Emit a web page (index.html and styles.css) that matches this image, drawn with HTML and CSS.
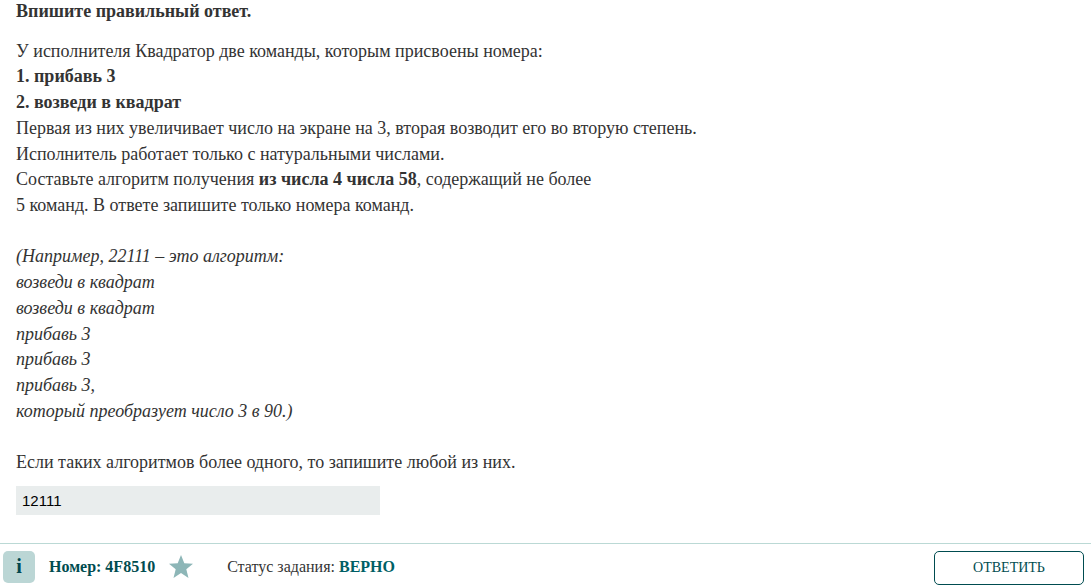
FILE: index.html
```html
<!DOCTYPE html>
<html lang="ru">
<head>
    <meta charset="UTF-8">
    <meta name="viewport" content="width=device-width, initial-scale=1.0">
    <title>Задание 4F8510</title>
    <link rel="stylesheet" href="styles.css">
</head>
<body>
    <div class="task">
        <div class="hint">Впишите правильный ответ.</div>
        <div class="task-text">
            <p>У исполнителя Квадратор две команды, которым присвоены номера:</p>
            <p><b>1. прибавь 3</b></p>
            <p><b>2. возведи в квадрат</b></p>
            <p>Первая из них увеличивает число на экране на 3, вторая возводит его во вторую степень.</p>
            <p>Исполнитель работает только с натуральными числами.</p>
            <p>Составьте алгоритм получения <b>из числа 4 числа 58</b>, содержащий не более<br>5 команд. В ответе запишите только номера команд.</p>
            <p class="example">(Например, 22111 – это алгоритм:<br>
            возведи в квадрат<br>
            возведи в квадрат<br>
            прибавь 3<br>
            прибавь 3<br>
            прибавь 3,<br>
            который преобразует число 3 в 90.)</p>
            <p>Если таких алгоритмов более одного, то запишите любой из них.</p>
        </div>
        <input class="answer-input" type="text" value="12111">
    </div>
    <div class="task-bar">
        <div class="info-button">i</div>
        <div class="number">Номер: 4F8510</div>
        <svg class="star" viewBox="0 0 24 24" width="24" height="24">
            <path d="M12 0l3.300 8.200 8.700.6-6.700 5.500 2.200 8.600-7.500-4.800-7.500 4.800 2.200-8.600L0 8.800l8.700-.6z"/>
        </svg>
        <div class="status">Статус задания: <span class="status-value">ВЕРНО</span></div>
        <button class="answer-button">ОТВЕТИТЬ</button>
    </div>
</body>
</html>
```
FILE: styles.css
```css
body {
    font-family: "Liberation Serif", "Times New Roman", serif;
    background-color: #fff;
    color: #333;
    margin: 0;
}

.task {
    box-sizing: border-box;
    height: 543px;
    padding: 0 16px;
    font-size: 18px;
    line-height: 25.72px;
    overflow: hidden;
}

.hint {
    font-weight: bold;
    margin-top: -1.4px;
    margin-bottom: 14.4px;
}

.task-text p {
    margin: 0;
}

.task-text .example {
    margin: 25.72px 0;
    font-style: italic;
}

.answer-input {
    display: block;
    box-sizing: border-box;
    width: 364px;
    height: 29px;
    margin-top: 9.8px;
    padding: 0 6px;
    border: none;
    background-color: #e9eded;
    color: #000;
    font-family: "Liberation Sans", Arial, sans-serif;
    font-size: 15px;
}

.task-bar {
    display: flex;
    align-items: flex-start;
    box-sizing: border-box;
    height: 44px;
    padding: 7px 7px 0 3px;
    border-top: 1px solid #bbd9d5;
    font-size: 16px;
    line-height: 32px;
}

.info-button {
    width: 32px;
    height: 32px;
    border-radius: 5px;
    background-color: #bbd6d5;
    color: #00474f;
    font-size: 20px;
    font-weight: bold;
    line-height: 31px;
    text-align: center;
}

.number {
    margin-left: 14px;
    color: #004c50;
    font-weight: bold;
}

.star {
    margin-top: 4px;
    margin-left: 14px;
    fill: #8db6b7;
}

.status {
    margin-left: 34px;
}

.status-value {
    color: #005f66;
    font-weight: bold;
}

.answer-button {
    width: 150px;
    height: 34px;
    margin-left: auto;
    border: 1px solid #004c50;
    border-radius: 5px;
    background-color: #fff;
    color: #004c50;
    font-family: inherit;
    font-size: 14px;
}
```
